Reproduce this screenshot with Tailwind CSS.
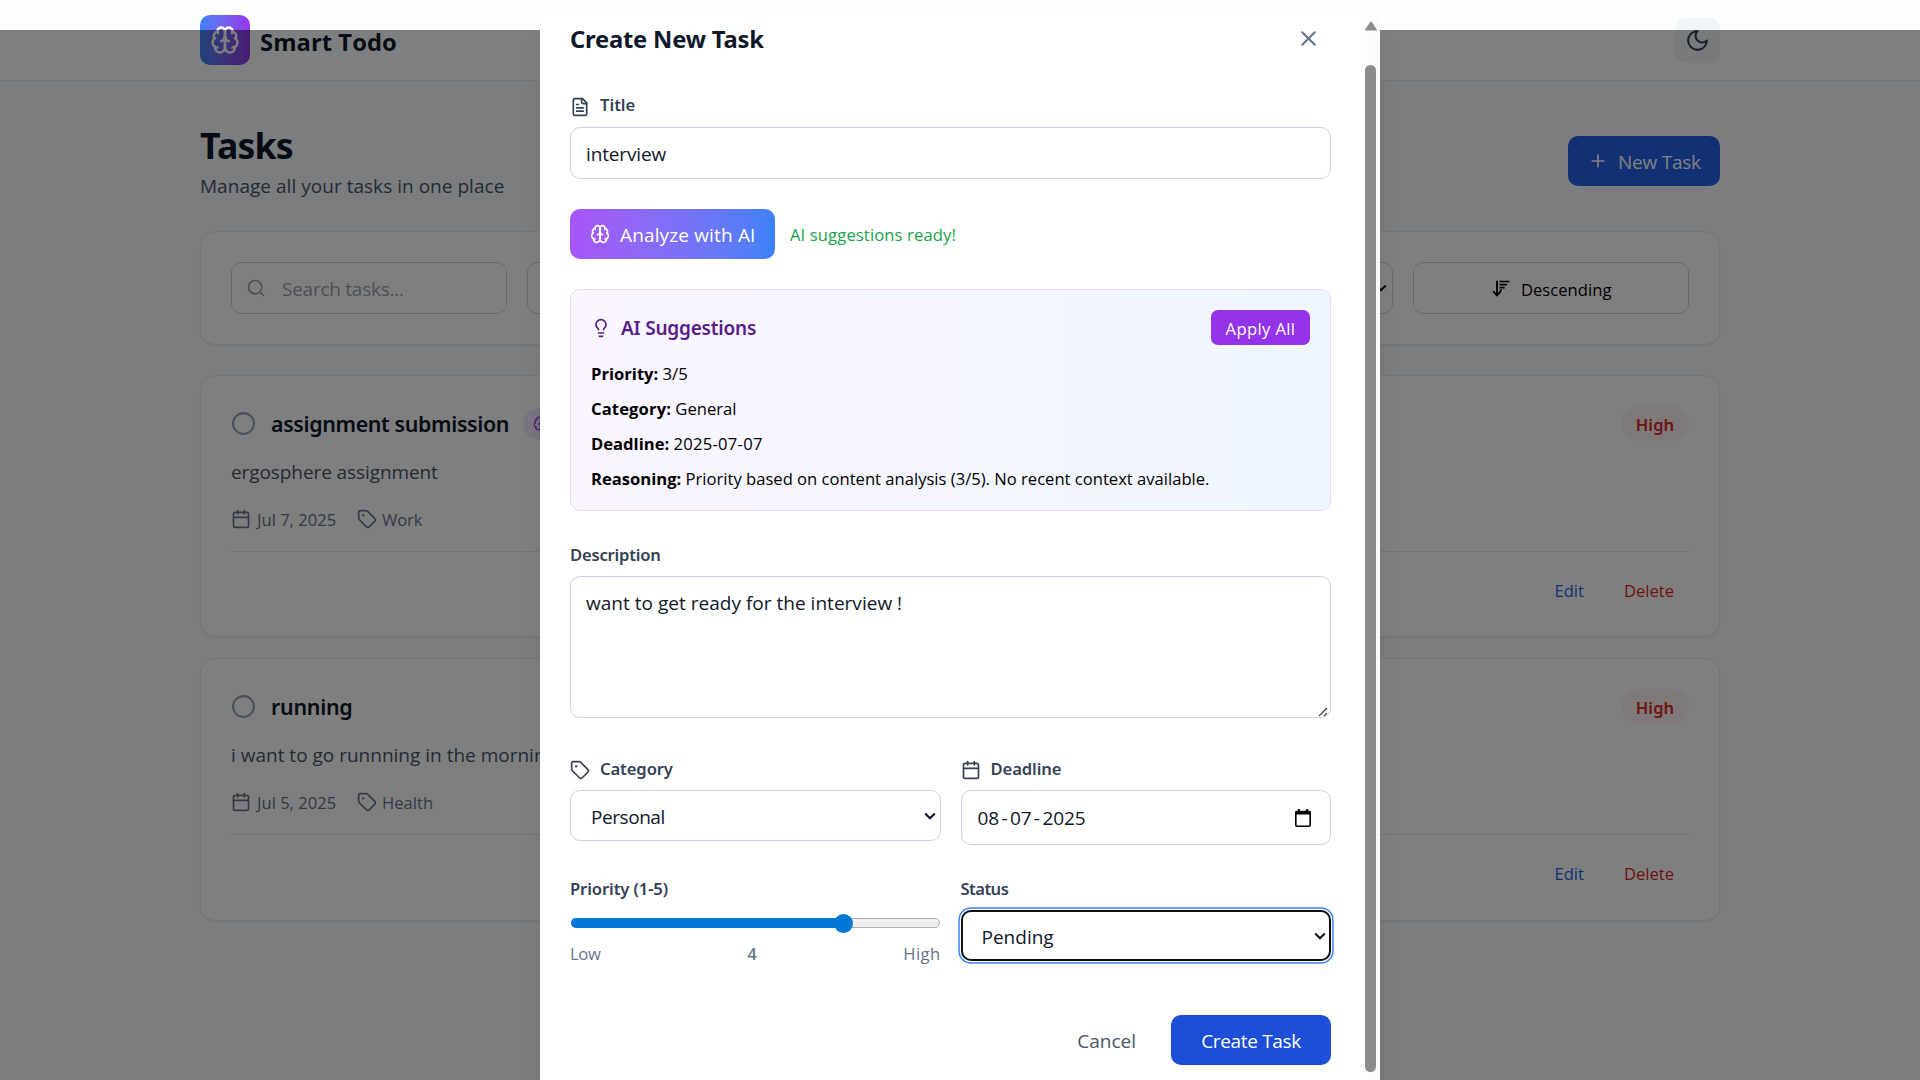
<!DOCTYPE html>
<html lang="en">
<head>
<meta charset="utf-8">
<title>Smart Todo</title>
<script src="https://cdn.jsdelivr.net/npm/@tailwindcss/browser@4"></script>
</head>
<body class="relative h-[1080px] w-[1920px] overflow-hidden bg-[#f8fafc] font-['Open_Sans',sans-serif] text-[19px] text-[#0f172a]">

<svg class="hidden">
  <symbol id="brain" viewBox="0 0 24 24"><path d="M12 5a3 3 0 1 0-5.997.125 4 4 0 0 0-2.526 5.77 4 4 0 0 0 .556 6.588A4 4 0 1 0 12 18Z"/><path d="M12 5a3 3 0 1 1 5.997.125 4 4 0 0 1 2.526 5.77 4 4 0 0 1-.556 6.588A4 4 0 1 1 12 18Z"/><path d="M15 13a4.5 4.5 0 0 1-3-4 4.5 4.5 0 0 1-3 4M17.599 6.5a3 3 0 0 0 .399-1.375M6.003 5.125A3 3 0 0 0 6.401 6.5M3.477 10.896a4 4 0 0 1 .585-.396M19.938 10.5a4 4 0 0 1 .585.396M6 18a4 4 0 0 1-1.967-.516M19.967 17.484A4 4 0 0 1 18 18"/></symbol>
  <symbol id="moon" viewBox="0 0 24 24"><path d="M12 3a6 6 0 0 0 9 9 9 9 0 1 1-9-9Z"/></symbol>
  <symbol id="plus" viewBox="0 0 24 24"><path d="M5 12h14M12 5v14"/></symbol>
  <symbol id="search" viewBox="0 0 24 24"><circle cx="11" cy="11" r="8"/><path d="m21 21-4.3-4.3"/></symbol>
  <symbol id="x" viewBox="0 0 24 24"><path d="M18 6 6 18M6 6l12 12"/></symbol>
  <symbol id="file" viewBox="0 0 24 24"><path d="M15 2H6a2 2 0 0 0-2 2v16a2 2 0 0 0 2 2h12a2 2 0 0 0 2-2V7Z"/><path d="M14 2v4a2 2 0 0 0 2 2h4M10 9H8M16 13H8M16 17H8"/></symbol>
  <symbol id="bulb" viewBox="0 0 24 24"><path d="M15 14c.2-1 .7-1.7 1.5-2.5 1-.9 1.5-2.2 1.5-3.5A6 6 0 0 0 6 8c0 1 .2 2.2 1.5 3.5.7.7 1.3 1.5 1.5 2.5M9 18h6M10 22h4"/></symbol>
  <symbol id="tag" viewBox="0 0 24 24"><path d="M12.586 2.586A2 2 0 0 0 11.172 2H4a2 2 0 0 0-2 2v7.172a2 2 0 0 0 .586 1.414l8.704 8.704a2.426 2.426 0 0 0 3.42 0l6.58-6.58a2.426 2.426 0 0 0 0-3.42z"/><circle cx="7.5" cy="7.5" r=".5" fill="currentColor"/></symbol>
  <symbol id="calendar" viewBox="0 0 24 24"><path d="M8 2v4M16 2v4M3 10h18"/><rect width="18" height="18" x="3" y="4" rx="2"/></symbol>
  <symbol id="chevron" viewBox="0 0 12 8"><path d="m1.2 1.5 4.8 4.8 4.8-4.8"/></symbol>
</svg>

<header class="flex h-[81px] items-center justify-between border-b border-[#e2e8f0] bg-[#fdfefe] px-[200px]">
  <div class="flex items-center">
    <div class="flex size-[50px] items-center justify-center rounded-[10px] bg-linear-to-r from-[#3b82f6] to-[#9333ea] text-white">
      <svg class="size-[30px] fill-none stroke-current stroke-2" stroke-linecap="round" stroke-linejoin="round"><use href="#brain"/></svg>
    </div>
    <span class="ml-[10px] pt-[3px] text-[23.75px] leading-[30px] font-bold tracking-[0.06px]">Smart Todo</span>
  </div>
  <div class="flex size-[45px] items-center justify-center rounded-[10px] bg-[#f1f5f9] text-[#334155]">
    <svg class="size-[25px] fill-none stroke-current stroke-2" stroke-linecap="round" stroke-linejoin="round"><use href="#moon"/></svg>
  </div>
</header>

<main class="mx-[200px] pt-[39px]">
  <div class="flex h-[82px] items-center justify-between">
    <div>
      <h1 class="font-['Noto_Sans',sans-serif] text-[35.6px] leading-[50px] font-bold tracking-[-0.8px]">Tasks</h1>
      <p class="pt-px leading-[31px] tracking-[0.03px] text-[#475569]">Manage all your tasks in one place</p>
    </div>
    <div class="flex h-[50px] w-[152px] items-center rounded-[10px] bg-[#2563eb] pl-5 text-white">
      <svg class="size-5 fill-none stroke-current stroke-2" stroke-linecap="round"><use href="#plus"/></svg>
      <span class="ml-[10px] pt-[2px] font-medium tracking-[-0.24px]">New Task</span>
    </div>
  </div>

  <div class="mt-[29px] grid h-[114px] grid-cols-5 gap-5 rounded-[15px] border border-[#e2e8f0] bg-white p-[30px] shadow-xs">
    <div class="flex items-center rounded-[10px] border border-[#cbd5e1] pl-[14px] text-[#94a3b8]">
      <svg class="size-5 fill-none stroke-current stroke-2" stroke-linecap="round"><use href="#search"/></svg>
      <span class="ml-4 pt-[3px] tracking-[-0.25px] text-[#9ca3af]">Search tasks...</span>
    </div>
    <div class="rounded-[10px] border border-[#cbd5e1]"></div>
    <div class="rounded-[10px] border border-[#cbd5e1]"></div>
    <div class="flex items-center justify-end rounded-[10px] border border-[#cbd5e1] pr-[5px]">
      <svg class="h-2 w-3 fill-none stroke-current stroke-2"><use href="#chevron"/></svg>
    </div>
    <div class="flex items-center justify-center rounded-[10px] border border-[#cbd5e1] pl-px text-black">
      <svg class="h-[17px] w-[18px] fill-none stroke-current" viewBox="0 0 18 17"><path d="M5 .8v14" stroke-width="1.9"/><path d="m1.2 11.3 3.8 4 3.8-4" stroke-width="1.9"/><path d="M7.500 1.500h10M7.500 4.600h7.600M7.500 7.600h5.200" stroke-width="1.6"/><path d="M7.500 10.200h2.500" stroke-width="1.3"/></svg>
      <span class="ml-[11px] pt-[4px] text-[16.6px] tracking-[0.04px]">Descending</span>
    </div>
  </div>

  <article class="mt-[30px] h-[262px] rounded-[15px] border border-[#e2e8f0] bg-white p-[30px] shadow-xs">
    <div class="flex h-[35px] items-center">
      <svg class="size-[25px] fill-none stroke-[#94a3b8] stroke-2" viewBox="0 0 24 24"><circle cx="12" cy="12" r="10"/></svg>
      <h3 class="ml-[15px] w-[237px] pt-[2px] font-['Noto_Sans',sans-serif] text-[21.4px] font-semibold tracking-[-0.37px] whitespace-nowrap">assignment submission</h3>
      <span class="ml-[15px] flex h-[30px] w-[70px] items-center rounded-full bg-[#f3e8ff] pl-2.5 text-[#9333ea]"><svg class="size-[15px] fill-none stroke-current stroke-2" stroke-linecap="round" stroke-linejoin="round"><use href="#brain"/></svg></span>
      <span class="ml-auto flex h-[35px] w-[68px] items-center justify-center rounded-full bg-[#fef2f2] pt-[3px] font-['Noto_Sans',sans-serif] text-[16.6px] font-semibold tracking-[0.1px] text-[#dc2626]">High</span>
    </div>
    <p class="mt-[15px] h-[31px] pt-px leading-[31px] tracking-[-0.09px] text-[#475569]">ergosphere assignment</p>
    <div class="mt-[19px] flex h-[26px] items-center text-[16.6px] text-[#64748b]">
      <svg class="size-5 fill-none stroke-current stroke-2" stroke-linecap="round" stroke-linejoin="round"><use href="#calendar"/></svg>
      <span class="ml-[6px] w-[81px] pt-[2px] tracking-[0px]">Jul 7, 2025</span>
      <svg class="ml-[19px] size-5 fill-none stroke-current stroke-2" stroke-linecap="round" stroke-linejoin="round"><use href="#tag"/></svg>
      <span class="ml-[5px] pt-[2px] tracking-[-0.1px]">Work</span>
    </div>
    <div class="mt-[19px] flex h-[56px] items-end justify-end border-t border-[#e2e8f0] pr-[15px] text-[16.6px] leading-[33px]">
      <span class="text-[#2563eb]">Edit</span><span class="ml-[40px] text-[#dc2626]">Delete</span>
    </div>
  </article>

  <article class="mt-[21px] h-[263px] rounded-[15px] border border-[#e2e8f0] bg-white p-[30px] shadow-xs">
    <div class="flex h-[35px] items-center">
      <svg class="size-[25px] fill-none stroke-[#94a3b8] stroke-2" viewBox="0 0 24 24"><circle cx="12" cy="12" r="10"/></svg>
      <h3 class="ml-[15px] pt-[2px] font-['Noto_Sans',sans-serif] text-[21.4px] font-semibold tracking-[-0.27px]">running</h3>
      <span class="ml-auto flex h-[35px] w-[68px] items-center justify-center rounded-full bg-[#fef2f2] pt-[3px] font-['Noto_Sans',sans-serif] text-[16.6px] font-semibold tracking-[0.1px] text-[#dc2626]">High</span>
    </div>
    <p class="mt-[15px] h-[31px] pt-px leading-[31px] text-[#475569]">i want to go runnning in the morning</p>
    <div class="mt-[19px] flex h-[26px] items-center text-[16.6px] text-[#64748b]">
      <svg class="size-5 fill-none stroke-current stroke-2" stroke-linecap="round" stroke-linejoin="round"><use href="#calendar"/></svg>
      <span class="ml-[6px] w-[81px] pt-[2px] tracking-[0px]">Jul 5, 2025</span>
      <svg class="ml-[19px] size-5 fill-none stroke-current stroke-2" stroke-linecap="round" stroke-linejoin="round"><use href="#tag"/></svg>
      <span class="ml-[5px] pt-[2px]">Health</span>
    </div>
    <div class="mt-[19px] flex h-[56px] items-end justify-end border-t border-[#e2e8f0] pr-[15px] text-[16.6px] leading-[33px]">
      <span class="text-[#2563eb]">Edit</span><span class="ml-[40px] text-[#dc2626]">Delete</span>
    </div>
  </article>
</main>

<div class="absolute inset-x-0 top-[30px] bottom-0 bg-black/50"></div>

<div class="absolute top-[15px] left-[540px] flex h-[1080px] w-[840px] rounded-tl-[15px] bg-white pl-[30px] shadow-xl">
  <form class="w-[761px] pt-2.5">
    <div class="flex h-[30px] items-center justify-between">
      <h2 class="font-['Noto_Sans',sans-serif] text-[23.75px] font-bold tracking-[-0.2px]">Create New Task</h2>
      <svg class="mr-[10px] mb-[3px] size-[25px] fill-none stroke-[#64748b] stroke-2" stroke-linecap="round"><use href="#x"/></svg>
    </div>

    <div class="mt-[37px] flex h-[25px] items-center text-[#334155]">
      <svg class="mt-[5px] size-5 fill-none stroke-current stroke-2" stroke-linecap="round" stroke-linejoin="round"><use href="#file"/></svg>
      <span class="ml-2.5 pt-[2px] font-['Noto_Sans',sans-serif] text-[16.6px] font-semibold">Title</span>
    </div>
    <div class="mt-2.5 flex h-[52px] items-center rounded-[10px] border border-[#cbd5e1] pt-[3px] pl-[15px] tracking-[-0.14px]">interview</div>

    <div class="mt-[30px] flex h-[50px] items-center">
      <div class="flex h-full w-[205px] items-center rounded-[10px] bg-linear-to-r from-[#a855f7] to-[#3b82f6] pl-5 text-white">
        <svg class="size-5 fill-none stroke-current stroke-2" stroke-linecap="round" stroke-linejoin="round"><use href="#brain"/></svg>
        <span class="ml-2.5 pt-[2px] font-medium tracking-[0.15px]">Analyze with AI</span>
      </div>
      <span class="ml-[15px] pt-[3px] text-[16.6px] tracking-[0.12px] text-[#16a34a]">AI suggestions ready!</span>
    </div>

    <section class="mt-[30px] h-[222px] rounded-[10px] border border-[#e9d5ff] bg-linear-to-r from-[#faf5ff] to-[#eff6ff] p-5">
      <div class="flex h-[35px] items-center justify-between">
        <div class="flex items-center text-[#581c87]">
          <svg class="size-5 fill-none stroke-current stroke-2" stroke-linecap="round" stroke-linejoin="round"><use href="#bulb"/></svg>
          <span class="ml-2.5 pt-[2px] font-['Noto_Sans',sans-serif] font-semibold tracking-[-0.2px]">AI Suggestions</span>
        </div>
        <div class="flex h-[35px] w-[99px] items-center justify-center rounded-[7px] bg-[#9333ea] pt-[3px] text-[16.6px] tracking-[0.37px] text-white">Apply All</div>
      </div>
      <div class="mt-[11px] text-[16.6px] leading-[35px] text-black">
        <p><b>Priority:</b> 3/5</p>
        <p><b class="tracking-[0.12px]">Category:</b> General</p>
        <p><b>Deadline:</b> <span class="tracking-[0.26px]">2025-07-07</span></p>
        <p><b>Reasoning:</b> Priority based on content analysis (3/5). No recent context available.</p>
      </div>
    </section>

    <div class="mt-[31px] flex h-[25px] items-center pt-[2px] font-['Noto_Sans',sans-serif] text-[16.6px] font-semibold tracking-[-0.2px] text-[#334155]">Description</div>
    <div class="relative mt-[9px] h-[142px] rounded-[10px] border border-[#cbd5e1] pt-[11px] pl-[15px] leading-[31px] tracking-[0.02px]">want to get ready for the interview !
      <svg class="absolute right-0.5 bottom-0 size-[10px] stroke-[#444]" viewBox="0 0 10 10"><path d="M1 9 9 1M6 9l3-3" fill="none" stroke-width="1.3"/></svg>
    </div>

    <div class="mt-[38px] grid grid-cols-2 gap-x-5">
      <div>
        <div class="flex h-[25px] items-center text-[#334155]">
          <svg class="mt-[3px] size-5 fill-none stroke-current stroke-2" stroke-linecap="round" stroke-linejoin="round"><use href="#tag"/></svg>
          <span class="ml-2.5 pt-[2px] font-['Noto_Sans',sans-serif] text-[16.6px] font-semibold tracking-[-0.1px]">Category</span>
        </div>
        <div class="mt-[9px] flex h-[51px] items-center justify-between rounded-[10px] border border-[#cbd5e1] pr-[4px] pl-5"><span class="pt-[3px] tracking-[-0.44px]">Personal</span><svg class="h-2 w-3 fill-none stroke-current stroke-2"><use href="#chevron"/></svg></div>
      </div>
      <div>
        <div class="flex h-[25px] items-center text-[#334155]">
          <svg class="mt-[3px] size-5 fill-none stroke-current stroke-2" stroke-linecap="round" stroke-linejoin="round"><use href="#calendar"/></svg>
          <span class="ml-2.5 pt-[2px] font-['Noto_Sans',sans-serif] text-[16.6px] font-semibold tracking-[-0.1px]">Deadline</span>
        </div>
        <div class="mt-[9px] flex h-[55px] items-center rounded-[10px] border border-[#cbd5e1] pt-px pr-[19px] pl-4">
          <span class="tracking-[-0.1px]">08</span><span class="mx-[2.4px]">-</span><span class="tracking-[-0.1px]">07</span><span class="mx-[2.4px]">-</span><span class="tracking-[-0.1px]">2025</span>
          <svg class="ml-auto h-[18px] w-4 text-black" viewBox="0 0 16 18"><path d="M1.8 2.5h12.4a1 1 0 0 1 1 1v12.7a1 1 0 0 1-1 1H1.8a1 1 0 0 1-1-1V3.5a1 1 0 0 1 1-1z" fill="none" stroke="currentColor" stroke-width="1.6"/><path d="M.8 2h14.4v3.500H.8zM2.8 0h2v3h-2zM11.2 0h2v3h-2z" fill="currentColor"/></svg>
        </div>
      </div>
      <div class="mt-[30px]">
        <div class="flex h-[26px] items-center pt-[2px] font-['Noto_Sans',sans-serif] text-[16.6px] font-semibold tracking-[-0.1px] text-[#334155]">Priority (1-5)</div>
        <div class="relative mt-[17px] ml-px h-2.5 w-[369px] rounded-full border border-[#b2b2b2] bg-[#efefef]">
          <div class="absolute -top-px -left-px h-2.5 w-[273px] rounded-l-full bg-[#0078d7]"></div>
          <div class="absolute -top-[5.5px] left-[262px] size-[19px] rounded-full bg-[#0078d7]"></div>
        </div>
        <div class="mt-[13px] flex h-[25px] items-center justify-between pt-[2px] text-[16.6px] text-[#64748b]"><span class="tracking-[-0.33px]">Low</span><span class="font-semibold">4</span><span class="tracking-[0.4px]">High</span></div>
      </div>
      <div class="mt-[30px]">
        <div class="flex h-[26px] items-center pt-[2px] font-['Noto_Sans',sans-serif] text-[16.6px] font-semibold tracking-[-0.55px] text-[#334155]">Status</div>
        <div class="mt-[9px] flex h-[51px] items-center justify-between rounded-[10px] border-2 border-[#101010] pr-[3px] pl-[19px] ring-[1.5px] ring-[#3b82f6] ring-offset-[1.2px]"><span class="pt-[3px]">Pending</span><svg class="h-2 w-3 fill-none stroke-current stroke-2"><use href="#chevron"/></svg></div>
      </div>
    </div>

    <div class="mt-[49px] flex h-[50px] items-center justify-end">
      <span class="mr-[35px] pt-[2px] text-[#475569]">Cancel</span>
      <div class="flex h-full w-40 items-center justify-center rounded-[10px] bg-[#1d4ed8] pt-[2px] font-medium tracking-[-0.34px] text-white">Create Task</div>
    </div>
  </form>
  <div class="ml-auto flex w-[19px] flex-col items-center bg-[#fcfcfc] pt-[6px]">
    <svg class="h-[10px] w-3 fill-[#8b8b8b]" viewBox="0 0 12 10"><path d="M5 1.2a1.2 1.2 0 0 1 2 0l4.8 7.2q.4 1.2-.8 1.2H1Q-.2 9.600.2 8.400z"/></svg>
    <div class="mt-[34px] h-[1007px] w-[11px] rounded-full bg-[#8b8b8b]"></div>
  </div>
</div>
</body>
</html>
